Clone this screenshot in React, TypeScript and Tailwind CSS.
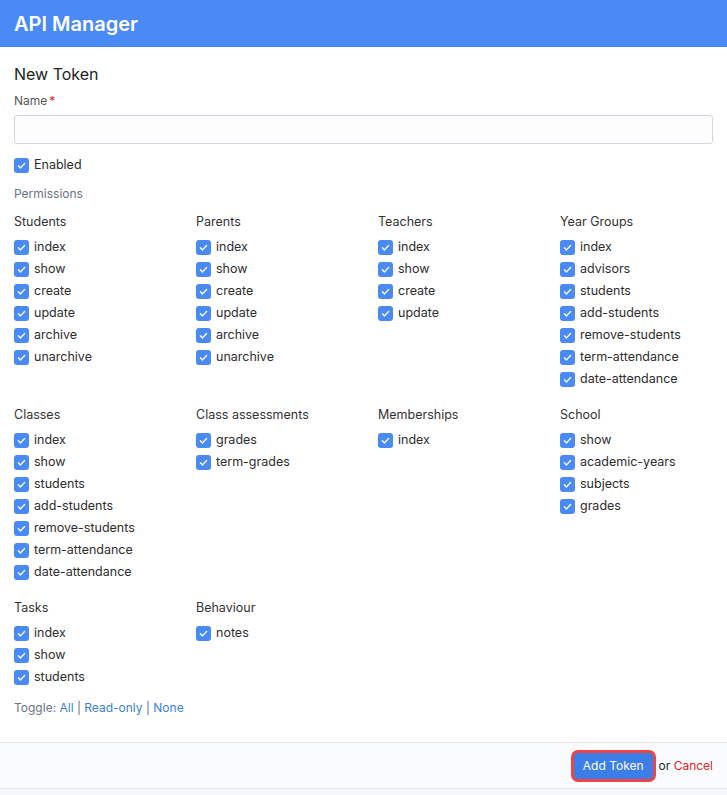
import React from "react";

type Group = { title: string; items: string[] };

const rows: Group[][] = [
  [
    { title: "Students", items: ["index", "show", "create", "update", "archive", "unarchive"] },
    { title: "Parents", items: ["index", "show", "create", "update", "archive", "unarchive"] },
    { title: "Teachers", items: ["index", "show", "create", "update"] },
    {
      title: "Year Groups",
      items: ["index", "advisors", "students", "add-students", "remove-students", "term-attendance", "date-attendance"],
    },
  ],
  [
    {
      title: "Classes",
      items: ["index", "show", "students", "add-students", "remove-students", "term-attendance", "date-attendance"],
    },
    { title: "Class assessments", items: ["grades", "term-grades"] },
    { title: "Memberships", items: ["index"] },
    { title: "School", items: ["show", "academic-years", "subjects", "grades"] },
  ],
  [
    { title: "Tasks", items: ["index", "show", "students"] },
    { title: "Behaviour", items: ["notes"] },
  ],
];

function Check() {
  return (
    <span className="flex h-[15px] w-[15px] shrink-0 items-center justify-center rounded-[3px] bg-[#4a8af4]">
      <svg viewBox="0 0 16 16" className="h-[11px] w-[11px]" fill="none">
        <path d="M3.5 8.5l3 3 6-6.5" stroke="white" strokeWidth="2" strokeLinecap="round" strokeLinejoin="round" />
      </svg>
    </span>
  );
}

function CheckRow({ label }: { label: string }) {
  return (
    <label className="flex h-[22px] items-center gap-[5px] text-[12.5px] text-[#2d2d2d]">
      <Check />
      <span>{label}</span>
    </label>
  );
}

export default function App() {
  return (
    <div className="min-h-[795px] bg-[#f3f6fb] font-['Inter','Liberation_Sans',sans-serif]">
      <div className="flex h-[47px] items-center bg-[#4a8af4] px-[14px]">
        <h1 className="text-[20px] font-semibold text-white">API Manager</h1>
      </div>

      <div className="bg-white px-[14px] pt-[15px] pb-[25px]">
        <h2 className="text-[16px] text-[#222]">New Token</h2>
        <div className="mt-[6px] text-[12px] text-[#555]">
          Name<span className="ml-[2px] text-[#dc2626]">*</span>
        </div>
        <input className="mt-[5px] block h-[29px] w-full rounded-[3px] border border-[#cfd6df] bg-[#fdfdfe]" />

        <div className="mt-[10px]">
          <CheckRow label="Enabled" />
        </div>
        <div className="mt-[9px] text-[12px] text-[#6b7280]">Permissions</div>

        <div className="mt-[8px] flex flex-col gap-[14px]">
          {rows.map((row, i) => (
            <div key={i} className="grid grid-cols-[repeat(4,182px)]">
              {row.map((g) => (
                <div key={g.title}>
                  <div className="mb-[3px] flex h-[22px] items-center text-[12.5px] text-[#333]">{g.title}</div>
                  {g.items.map((it) => (
                    <CheckRow key={it} label={it} />
                  ))}
                </div>
              ))}
            </div>
          ))}
        </div>

        <div className="mt-[11px] text-[12px] text-[#6b7280]">
          Toggle: <span className="text-[#3b82d6]">All</span> |{" "}
          <span className="text-[#3b82d6]">Read-only</span> | <span className="text-[#3b82d6]">None</span>
        </div>
      </div>

      <div className="flex h-[47px] items-center justify-end border-y border-[#e3e8ef] bg-[#fafbfd] px-[14px]">
        <button className="rounded-[4px] bg-[#3b7de9] px-[9px] py-[4px] text-[12px] text-white ring-[3px] ring-[#ef4444]">
          Add Token
        </button>
        <span className="ml-[6px] text-[12px] text-[#222]">
          or <span className="text-[#dc2626]">Cancel</span>
        </span>
      </div>
    </div>
  );
}
